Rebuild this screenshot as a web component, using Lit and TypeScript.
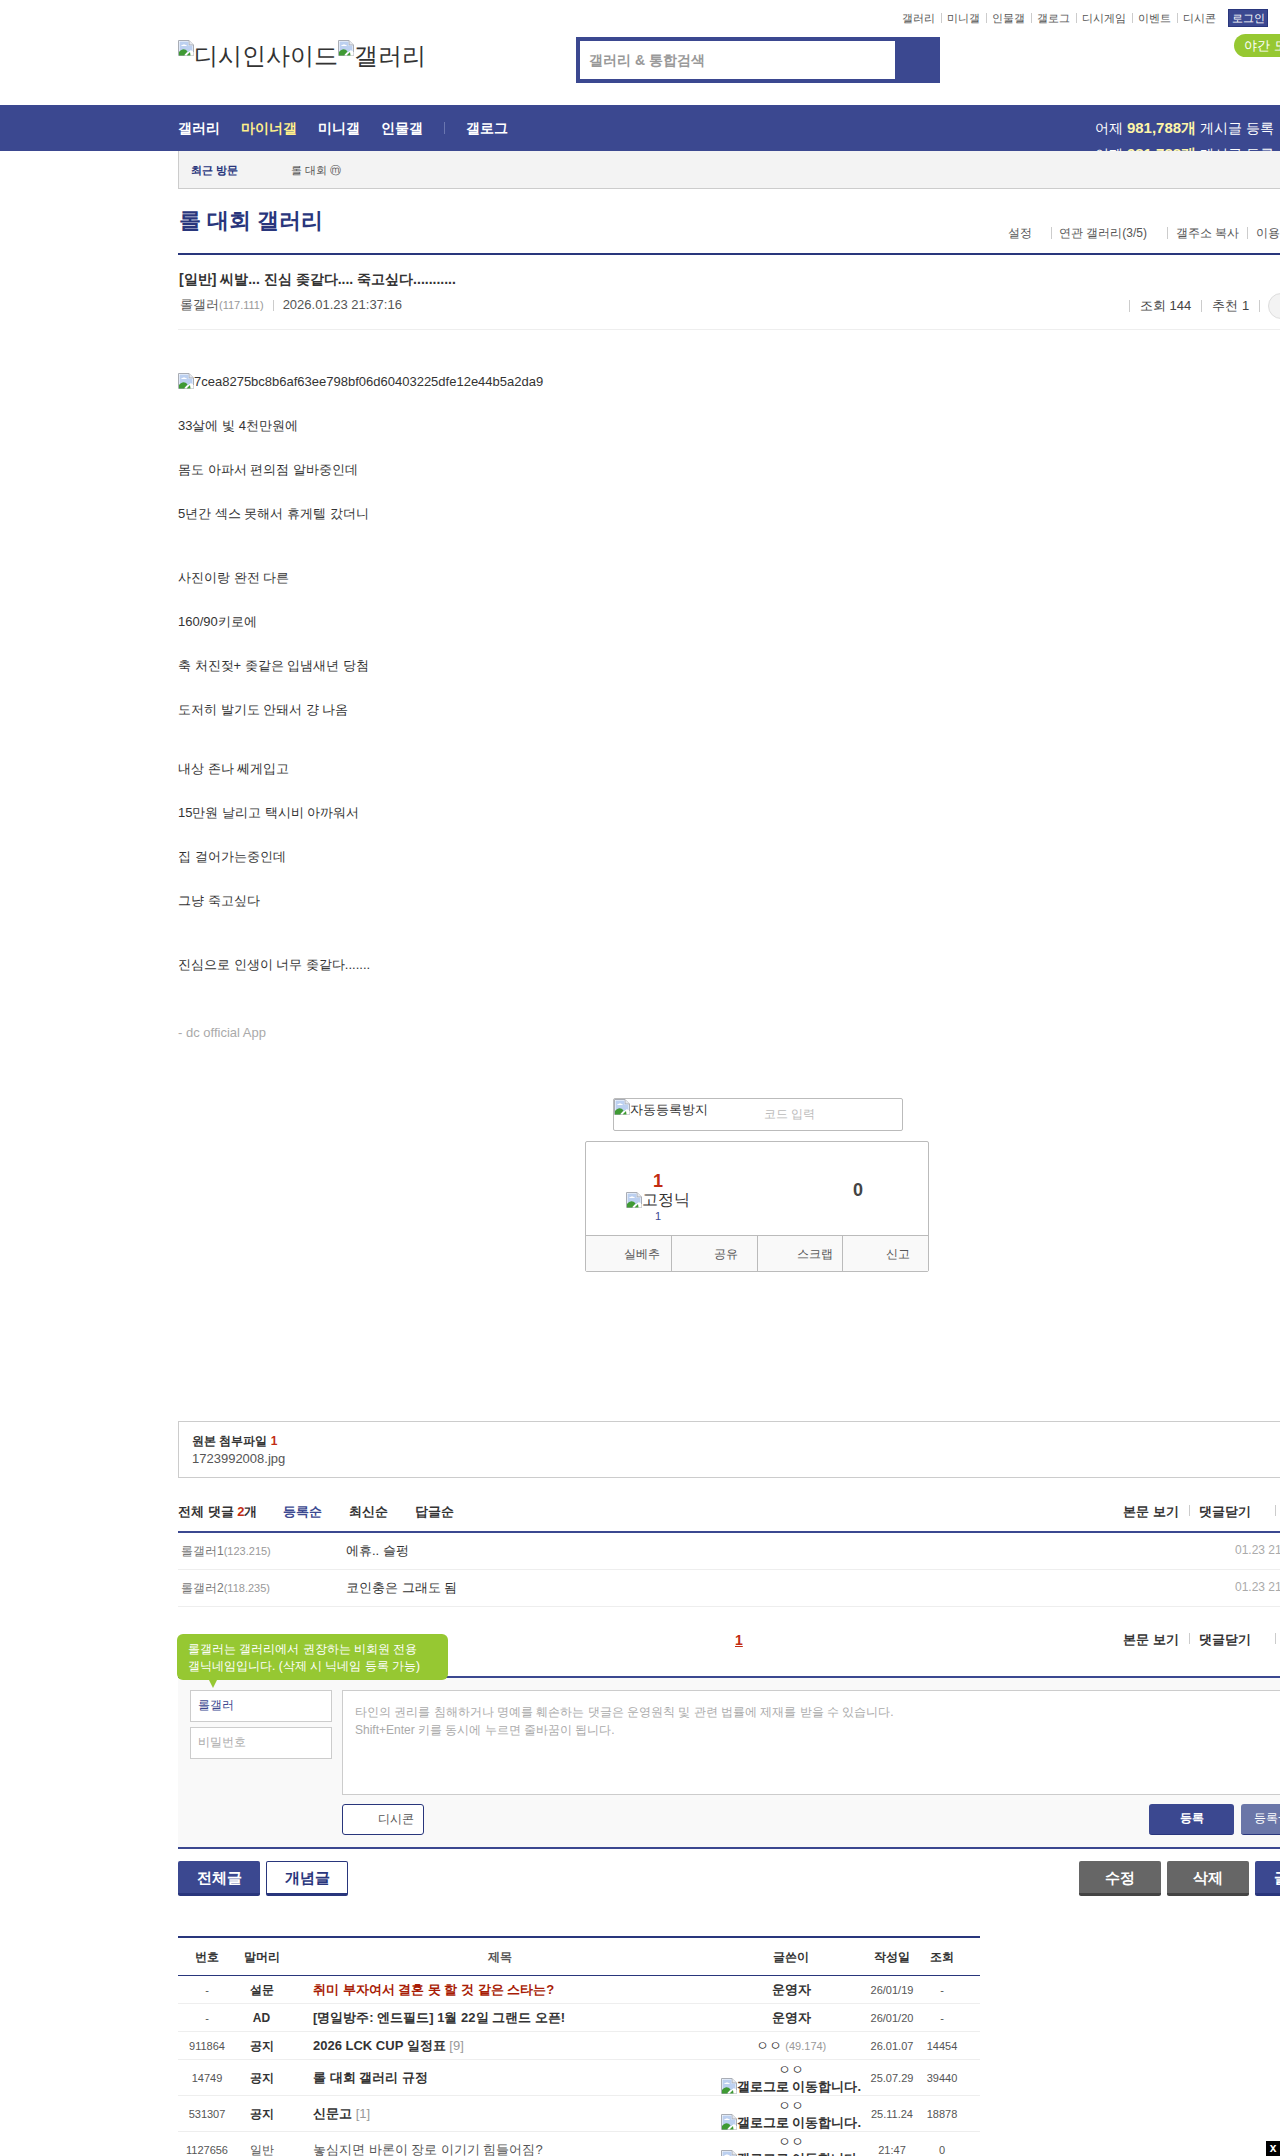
import { LitElement, html, css, svg } from "lit";
import { customElement } from "lit/decorators.js";

const brokenImg = () => html`<svg class="bi" viewBox="0 0 16 16" width="16" height="16" aria-hidden="true">
  ${svg`<path d="M0.5 0.5H11L15.5 5V15.5H0.5Z" fill="#fff" stroke="#a9adb5"/>
  <path d="M11 .5V5H15.5" fill="#e6e9ef" stroke="#a9adb5"/>
  <path d="M1.5 1.5H10.5V5.5H14.5V11L1.5 14.5Z" fill="#bcd0f0"/>
  <path d="M3 6c1.5-2 4.500-2 6 0z" fill="#fff"/>
  <path d="M1 15.5V12C4 8.500 7 8.500 9.500 11.500L6 15.500Z" fill="#3f9a34"/>
  <path d="M7 15.500L11 11.500L13 10L15.500 12.500V15.500Z" fill="#fff"/>
  <path d="M8.500 15.500L12 12L12.500 15.500Z" fill="#3f9a34"/>`}
</svg>`;

const topLinks = ["갤러리", "미니갤", "인물갤", "갤로그", "디시게임", "이벤트", "디시콘"];

const bodyLines: [string, string][] = [
  ["33살에 빛 4천만원에", "g24"],
  ["몸도 아파서 편의점 알바중인데", "g24"],
  ["5년간 섹스 못해서 휴게텔 갔더니", "g24"],
  ["사진이랑 완전 다른", "g44"],
  ["160/90키로에", "g24"],
  ["축 처진젖+ 좆같은 입냄새년 당첨", "g24"],
  ["도저히 발기도 안돼서 걍 나옴", "g24"],
  ["내상 존나 쎄게입고", "g39"],
  ["15만원 날리고 택시비 아까워서", "g24"],
  ["집 걸어가는중인데", "g24"],
  ["그냥 죽고싶다", "g24"],
  ["진심으로 인생이 너무 좆같다.......", "g44"],
];

const replies = [
  { name: "롤갤러1", ip: "(123.215)", text: "에휴.. 슬펑" },
  { name: "롤갤러2", ip: "(118.235)", text: "코인충은 그래도 됨" },
];

interface Row {
  no: string; head: string; title: string; count?: string; writer: string; ip?: string;
  gallog?: boolean; date: string; views: string; cls: string;
}
const rows: Row[] = [
  { no: "-", head: "설문", title: "취미 부자여서 결혼 못 할 것 같은 스타는?", writer: "운영자", date: "26/01/19", views: "-", cls: "short survey" },
  { no: "-", head: "AD", title: "[명일방주: 엔드필드] 1월 22일 그랜드 오픈!", writer: "운영자", date: "26/01/20", views: "-", cls: "short strong" },
  { no: "911864", head: "공지", title: "2026 LCK CUP 일정표", count: "[9]", writer: "ㅇㅇ", ip: "(49.174)", date: "26.01.07", views: "14454", cls: "short strong" },
  { no: "14749", head: "공지", title: "롤 대회 갤러리 규정", writer: "ㅇㅇ", gallog: true, date: "25.07.29", views: "39440", cls: "tall strong" },
  { no: "531307", head: "공지", title: "신문고", count: "[1]", writer: "ㅇㅇ", gallog: true, date: "25.11.24", views: "18878", cls: "tall strong" },
  { no: "1127656", head: "일반", title: "놓심지면 바론이 장로 이기기 힘들어짐?", writer: "ㅇㅇ", gallog: true, date: "21:47", views: "0", cls: "tall" },
];

@customElement("app-root")
export class AppRoot extends LitElement {
  static styles = css`
    :host {
      display: block; width: 1280px; height: 2156px; overflow: hidden; position: relative; background: #fff;
      font-family: "Liberation Sans", sans-serif; font-size: 13px; color: #333; line-height: 20px;
    }
    .bi { display: inline-block; flex: none; vertical-align: top; }
    .header { height: 105px; width: 1280px; box-sizing: border-box; }
    .top { display: flex; justify-content: flex-end; align-items: center; height: 18px; padding: 9px 12px 0 0; font-size: 11px; color: #555; }
    .top a { display: flex; align-items: center; margin-top: -1px; }
    .top a + a::before { content: ""; width: 1px; height: 10px; background: #ccc; margin: 0 5px 0 6px; }
    .login { background: #3b4890; border: 1px solid #29367c; color: #fff; width: 38px; height: 16px; line-height: 16px; text-align: center; margin-left: 12px; }
    .brand { display: flex; align-items: flex-start; margin: 10px 0 0 178px; }
    .logo { width: 398px; flex: none; margin-top: 3px; font-size: 24px; line-height: 28px; color: #333; display: flex; }
    .logo span { margin-top: 2px; }
    .search { width: 364px; height: 46px; background: #3b4890; box-sizing: border-box; padding: 4px 0 0 4px; flex: none; }
    .search div { width: 315px; height: 38px; background: #fff; line-height: 38px; padding-left: 9px; box-sizing: border-box; font-size: 14px; color: #999; font-weight: 700; }
    .pill { margin: -3px 0 0 294px; flex: none; width: 110px; height: 23px; line-height: 23px; background: #96c832; color: #fff; border-radius: 12px; padding-left: 10px; box-sizing: border-box; font-size: 13px; }
    .nav { height: 46px; background: #3b4890; overflow: hidden; display: flex; padding-left: 178px; color: #fff; font-size: 14px; font-weight: 700; line-height: 46px; }
    .nav a { margin-right: 21px; }
    .nav .on { color: #ffef8a; }
    .nav .sep { width: 1px; height: 12px; background: #6a76b0; margin: 17px 21px 0 0; }
    .stats { margin-left: auto; width: 185px; flex: none; font-weight: 400; line-height: 25px; padding-top: 10px; white-space: nowrap; }
    .stats b { color: #fff6a8; font-size: 15px; }
    .wrap { margin-left: 178px; width: 1160px; }
    .recent { height: 37px; background: #f3f3f3; border-left: 1px solid #ccc; border-bottom: 1px solid #ccc; display: flex; align-items: center; padding-left: 12px; font-size: 11px; color: #555; }
    .recent b { color: #29367c; width: 100px; }
    .ghead { height: 64px; border-bottom: 2px solid #29367c; display: flex; }
    .ghead h1 { margin: 20px 0 0 1px; width: 829px; font-size: 22px; line-height: 24px; font-weight: 700; color: #29367c; white-space: nowrap; }
    .glinks { display: flex; align-items: center; height: 20px; margin-top: 34px; font-size: 12px; color: #555; white-space: nowrap; }
    .glinks .s { width: 1px; height: 12px; background: #ccc; margin: 0 7px 0 19px; }
    .glinks .s2 { margin: 0 8px 0 20px; }
    .glinks .t { width: 1px; height: 12px; background: #ccc; margin: 0 8px; }
    .phead { height: 74px; border-bottom: 1px solid #eee; position: relative; display: flex; flex-direction: column; padding-left: 1px; }
    .ptitle { margin-top: 14px; font-size: 14px; font-weight: 700; color: #333; line-height: 20px; white-space: nowrap; }
    .pmeta { margin: 6px 0 0 1px; display: flex; align-items: center; font-size: 13px; color: #555; height: 20px; }
    .pmeta small { font-size: 11px; color: #999; }
    .pmeta i { width: 1px; height: 11px; background: #ccc; margin: 0 9px; }
    .pright { position: absolute; left: 951px; top: 41px; display: flex; align-items: center; height: 20px; font-size: 13px; color: #444; white-space: nowrap; }
    .pright i { width: 1px; height: 12px; background: #ccc; }
    .pright span { margin: 0 10px; }
    .circle { width: 24px; height: 24px; border-radius: 50%; background: #f3f3f3; border: 1px solid #ddd; margin-left: 8px; flex: none; }
    .body p { margin: 0; line-height: 20px; font-size: 13px; color: #333; display: flex; }
    .body .first { margin-top: 42px; }
    .first .bi { margin-top: 1px; }
    .body .g24 { margin-top: 24px; }
    .body .g44 { margin-top: 44px; }
    .body .g39 { margin-top: 39px; }
    .body .g48 { margin-top: 48px; }
    .body .app { color: #aaa; }
    .captcha { margin: 55px 0 0 435px; width: 290px; height: 33px; box-sizing: border-box; border: 1px solid #bbb; border-radius: 2px; display: flex; font-size: 13px; color: #333; line-height: 16px; }
    .captcha span { margin-top: 3px; }
    .captcha em { font-style: normal; font-size: 12px; color: #bbb; margin: 7px 0 0 56px; }
    .vote { margin: 10px 0 0 407px; width: 344px; height: 131px; box-sizing: border-box; border: 1px solid #bbb; border-radius: 2px; display: flex; flex-direction: column; }
    .vtop { height: 93px; border-bottom: 1px solid #bbb; display: flex; }
    .vl { width: 144px; display: flex; flex-direction: column; align-items: center; }
    .vl b { color: #c22c12; font-size: 18px; line-height: 20px; margin-top: 29px; }
    .vl .fix { display: flex; font-size: 16px; line-height: 16px; color: #333; margin-top: 1px; }
    .vl small { font-size: 11px; color: #3b4890; line-height: 14px; margin-top: 1px; }
    .vr { margin: 38px 0 0 123px; font-size: 18px; line-height: 20px; font-weight: 700; color: #444; }
    .vbot { flex: 1; display: flex; background: #f9f9f9; font-size: 12px; color: #555; }
    .vbot div { width: 86px; box-sizing: border-box; text-align: right; padding-top: 8px; line-height: 20px; }
    .vbot div + div { border-left: 1px solid #bbb; }
    .p11 { padding-right: 11px; }
    .p19 { padding-right: 19px; }
    .p9 { padding-right: 9px; }
    .p18 { padding-right: 18px; }
    .attach { margin-top: 149px; height: 57px; box-sizing: border-box; border: 1px solid #ccc; padding: 10px 13px 0; line-height: 18px; color: #555; }
    .attach b { color: #333; font-size: 12px; display: block; }
    .attach b span { color: #c22c12; }
    .chead { display: flex; height: 29px; padding-top: 24px; color: #333; font-size: 13px; font-weight: 700; line-height: 20px; white-space: nowrap; position: relative; }
    .chead.line { border-bottom: 2px solid #3b4890; }
    .chead .total { width: 105px; }
    .chead .total span { color: #c22c12; }
    .chead .sort { margin-right: 27px; }
    .chead .sort.on { color: #3b4890; }
    .cright { display: flex; align-items: center; position: absolute; left: 945px; height: 20px; }
    .cright i { width: 1px; height: 11px; background: #ccc; margin: -4px 9px 0 10px; }
    .cright i.last { margin-left: 24px; }
    .reply { height: 37px; box-sizing: border-box; border-bottom: 1px solid #eee; display: flex; align-items: center; }
    .reply .n { width: 168px; padding-left: 3px; box-sizing: border-box; font-size: 12px; color: #777; }
    .reply .n small { font-size: 11px; color: #999; }
    .reply .x { width: 889px; font-size: 13px; color: #333; }
    .reply .d { font-size: 12px; color: #aaa; margin-top: -3px; }
    .cbar { height: 71px; position: relative; box-sizing: border-box; border-bottom: 2px solid #3b4890; }
    .page { position: absolute; left: 557px; top: 23px; color: #c22c12; font-weight: 700; text-decoration: underline; font-size: 14px; }
    .cbar .chead { height: 20px; padding-top: 23px; }
    .tip { position: absolute; left: -1px; top: 27px; width: 271px; height: 46px; box-sizing: border-box; background: #96c832; border-radius: 6px; color: #fff; font-size: 12px; line-height: 17px; padding: 7px 0 0 11px; white-space: nowrap; z-index: 2; }
    .tip::after { content: ""; position: absolute; left: 32px; top: 46px; border: 4px solid transparent; border-top: 8px solid #96c832; border-bottom: 0; }
    .write { height: 171px; box-sizing: border-box; background: #f9f9f9; border-bottom: 2px solid #3b4890; padding: 12px 0 0 12px; }
    .wtop { display: flex; }
    .wl { width: 142px; margin-right: 10px; flex: none; display: flex; flex-direction: column; gap: 5px; }
    .inp { height: 32px; box-sizing: border-box; border: 1px solid #ccc; background: #fff; font-size: 12px; line-height: 28px; padding-left: 7px; color: #3b4890; }
    .inp.ph { color: #aaa; }
    .ta { flex: 1; height: 105px; box-sizing: border-box; background: #fff; border: 1px solid #ccc; border-right: 0; padding: 12px 0 0 12px; color: #aaa; font-size: 12px; line-height: 18px; }
    .wbot { display: flex; margin: 9px 0 0 152px; }
    .wbtn { height: 31px; box-sizing: border-box; border-radius: 3px; font-size: 12px; font-weight: 700; line-height: 29px; text-align: center; flex: none; }
    .dccon { width: 82px; border: 1px solid #29367c; background: #fff; color: #555; font-weight: 400; text-align: right; padding-right: 9px; margin-right: 725px; }
    .reg { width: 85px; background: #3b4890; color: #fff; border-bottom: 1px solid #29367c; margin-right: 7px; }
    .reg.sub { background: #6a76a8; font-weight: 400; text-align: left; padding-left: 13px; }
    .btns { display: flex; gap: 6px; margin-top: 12px; }
    .btn { width: 82px; height: 35px; box-sizing: border-box; border-radius: 2px; font-size: 15px; font-weight: 700; line-height: 33px; text-align: center; flex: none; background: #3b4890; color: #fff; border-bottom: 3px solid #29367c; }
    .btn.white { background: #fff; color: #29367c; border: 1px solid #29367c; border-bottom-width: 3px; line-height: 31px; }
    .btn.grey { background: #666; border-bottom-color: #444; }
    .btn.sp { margin-left: 725px; }
    .table { margin-top: 40px; width: 802px; border-top: 2px solid #29367c; }
    .tr { display: grid; grid-template-columns: 58px 51px 426px 156px 46px 54px; padding-right: 11px; border-bottom: 1px solid #eee; box-sizing: border-box; align-items: center; text-align: center; color: #555; font-size: 12px; white-space: nowrap; }
    .tr.th { height: 38px; border-bottom-color: #29367c; font-weight: 700; color: #333; }
    .tr.short { height: 28px; }
    .tr.tall { height: 36px; }
    .tit { text-align: left; padding-left: 26px; font-size: 13px; color: #555; }
    .th .tit { text-align: center; padding: 0; font-size: 12px; }
    .tit small { font-size: 13px; color: #999; font-weight: 400; }
    .strong .tit, .survey .tit, .strong .hd, .survey .hd { font-weight: 700; color: #333; }
    .survey .tit { color: #a81c05; }
    .wr { font-size: 13px; color: #333; line-height: 17px; }
    .short .wr { font-weight: 700; }
    .short .wr.plain { font-weight: 400; }
    .wr small { font-size: 11px; color: #999; font-weight: 400; }
    .wr .gl { display: flex; justify-content: center; font-size: 13px; font-weight: 700; line-height: 17px; }
    .num { font-size: 11px; }
    .xbtn { position: absolute; right: 0; bottom: 0; width: 14px; height: 15px; background: #000; color: #fff; font-size: 12px; font-weight: 700; line-height: 14px; text-align: center; }
  `;

  private cright() {
    return html`<div class="cright"><span>본문 보기</span><i></i><span>댓글닫기</span><i class="last"></i></div>`;
  }

  render() {
    return html`
      <div class="header">
        <div class="top">
          ${topLinks.map((t) => html`<a>${t}</a>`)}
          <span class="login">로그인</span>
        </div>
        <div class="brand">
          <div class="logo">${brokenImg()}<span>디시인사이드</span>${brokenImg()}<span>갤러리</span></div>
          <div class="search"><div>갤러리 &amp; 통합검색</div></div>
          <div class="pill">야간 모드</div>
        </div>
      </div>
      <div class="nav">
        <a>갤러리</a><a class="on">마이너갤</a><a>미니갤</a><a>인물갤</a><span class="sep"></span><a>갤로그</a>
        <div class="stats">
          <div>어제 <b>981,788개</b> 게시글 등록</div>
          <div>어제 <b>981,788개</b> 게시글 등록</div>
        </div>
      </div>
      <div class="wrap">
        <div class="recent"><b>최근 방문</b><span>롤 대회 ⓜ</span></div>
        <div class="ghead">
          <h1>롤 대회 갤러리</h1>
          <div class="glinks">
            <span>설정</span><i class="s"></i><span>연관 갤러리(3/5)</span><i class="s s2"></i><span>갤주소 복사</span><i class="t"></i><span>이용 안내</span>
          </div>
        </div>
        <div class="phead">
          <div class="ptitle">[일반] 씨발... 진심 좆같다.... 죽고싶다...........</div>
          <div class="pmeta"><span>롤갤러<small>(117.111)</small></span><i></i><span>2026.01.23 21:37:16</span></div>
          <div class="pright"><i></i><span>조회 144</span><i></i><span>추천 1</span><i></i><div class="circle"></div></div>
        </div>
        <div class="body">
          <p class="first">${brokenImg()}<span>7cea8275bc8b6af63ee798bf06d60403225dfe12e44b5a2da9</span></p>
          ${bodyLines.map(([t, c]) => html`<p class=${c}>${t}</p>`)}
          <p class="g48 app">- dc official App</p>
        </div>
        <div class="captcha">${brokenImg()}<span>자동등록방지</span><em>코드 입력</em></div>
        <div class="vote">
          <div class="vtop">
            <div class="vl"><b>1</b><div class="fix">${brokenImg()}<span>고정닉</span></div><small>1</small></div>
            <div class="vr">0</div>
          </div>
          <div class="vbot"><div class="p11">실베추</div><div class="p19">공유</div><div class="p9">스크랩</div><div class="p18">신고</div></div>
        </div>
        <div class="attach"><b>원본 첨부파일 <span>1</span></b>1723992008.jpg</div>
        <div class="chead line">
          <span class="total">전체 댓글 <span>2</span>개</span>
          <span class="sort on">등록순</span><span class="sort">최신순</span><span class="sort">답글순</span>
          ${this.cright()}
        </div>
        ${replies.map((r) => html`<div class="reply">
          <span class="n">${r.name}<small>${r.ip}</small></span><span class="x">${r.text}</span><span class="d">01.23 21:40:12</span>
        </div>`)}
        <div class="cbar">
          <div class="chead">${this.cright()}</div>
          <span class="page">1</span>
          <div class="tip">롤갤러는 갤러리에서 권장하는 비회원 전용<br />갤닉네임입니다. (삭제 시 닉네임 등록 가능)</div>
        </div>
        <div class="write">
          <div class="wtop">
            <div class="wl"><div class="inp">롤갤러</div><div class="inp ph">비밀번호</div></div>
            <div class="ta">타인의 권리를 침해하거나 명예를 훼손하는 댓글은 운영원칙 및 관련 법률에 제재를 받을 수 있습니다.<br />Shift+Enter 키를 동시에 누르면 줄바꿈이 됩니다.</div>
          </div>
          <div class="wbot">
            <div class="wbtn dccon">디시콘</div><div class="wbtn reg">등록</div><div class="wbtn reg sub">등록+추천</div>
          </div>
        </div>
        <div class="btns">
          <div class="btn">전체글</div><div class="btn white">개념글</div>
          <div class="btn grey sp">수정</div><div class="btn grey">삭제</div><div class="btn">글쓰기</div>
        </div>
        <div class="table">
          <div class="tr th"><span>번호</span><span>말머리</span><span class="tit">제목</span><span>글쓴이</span><span>작성일</span><span>조회</span></div>
          ${rows.map((r) => html`<div class="tr ${r.cls}">
            <span class="num">${r.no}</span><span class="hd">${r.head}</span>
            <span class="tit">${r.title} ${r.count ? html`<small>${r.count}</small>` : ""}</span>
            <div class="wr ${r.ip ? "plain" : ""}">${r.writer}${r.ip ? html` <small>${r.ip}</small>` : ""}${r.gallog ? html`<div class="gl">${brokenImg()}<span>갤로그로 이동합니다.</span></div>` : ""}</div>
            <span class="num">${r.date}</span><span class="num">${r.views}</span>
          </div>`)}
        </div>
      </div>
      <div class="xbtn">x</div>
    `;
  }
}
